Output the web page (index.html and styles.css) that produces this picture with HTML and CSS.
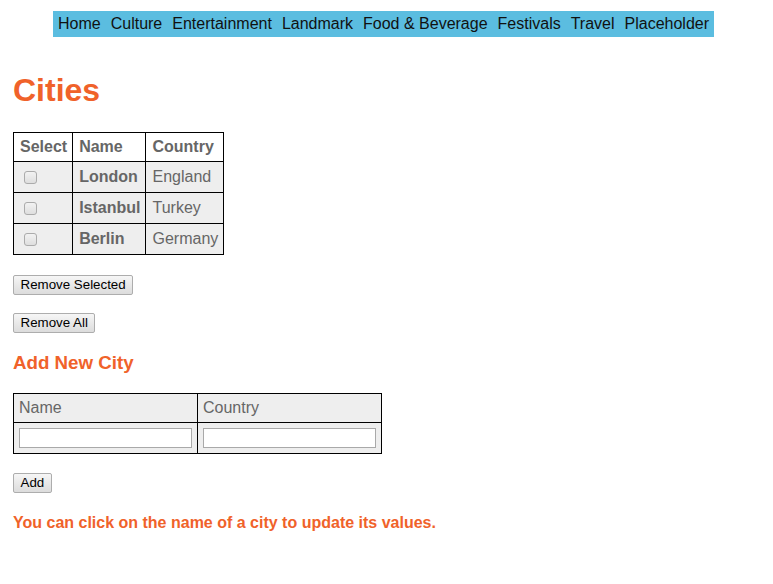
FILE: index.html
```html
<!DOCTYPE html>
<html>
<head>
<meta charset="utf-8">
<title>Cities</title>
<link rel="stylesheet" href="styles.css">
</head>
<body>
<div class="page">
<nav class="nav">
  <a class="nav-item" href="#">Home</a>
  <a class="nav-item" href="#">Culture</a>
  <a class="nav-item" href="#">Entertainment</a>
  <a class="nav-item" href="#">Landmark</a>
  <a class="nav-item" href="#">Food &amp; Beverage</a>
  <a class="nav-item" href="#">Festivals</a>
  <a class="nav-item" href="#">Travel</a>
  <a class="nav-item" href="#">Placeholder</a>
</nav>

<h1 class="title">Cities</h1>

<table class="cities">
  <thead>
    <tr><th>Select</th><th>Name</th><th>Country</th></tr>
  </thead>
  <tbody>
    <tr><td><input class="check" type="checkbox"></td><th>London</th><td>England</td></tr>
    <tr><td><input class="check" type="checkbox"></td><th>Istanbul</th><td>Turkey</td></tr>
    <tr><td><input class="check" type="checkbox"></td><th>Berlin</th><td>Germany</td></tr>
  </tbody>
</table>

<div class="actions">
  <button class="btn" type="button">Remove Selected</button>
  <button class="btn" type="button">Remove All</button>
</div>

<h3 class="subtitle">Add New City</h3>

<table class="add">
  <tr><td>Name</td><td>Country</td></tr>
  <tr><td><input class="field" type="text"></td><td><input class="field" type="text"></td></tr>
</table>

<div class="add-actions">
  <button class="btn" type="button">Add</button>
</div>

<h4 class="note">You can click on the name of a city to update its values.</h4>
</div>
</body>
</html>
```
FILE: styles.css
```css
body {
  margin: 8px;
  font-family: Arial, "Liberation Sans", sans-serif;
  font-size: 16px;
  color: #000;
  background: #fff;
}

.page {
  padding-left: 5px;
}

.nav {
  display: flex;
  width: fit-content;
  margin: 3px 0 0 40px;
  padding: 4px 0;
  background: #5bbde0;
}

.nav-item {
  padding: 0 5px;
  color: #111;
  text-decoration: none;
  line-height: 18px;
}

.title {
  margin: 35px 0 23px;
  font-size: 32px;
  line-height: 37px;
  color: #f0622a;
}

.cities,
.add {
  border-collapse: collapse;
  color: #666;
}

.cities th,
.cities td {
  border: 1px solid #000;
  padding: 6px 5px 6px 6px;
  line-height: 18px;
  text-align: left;
}

.cities thead th {
  background: #fff;
  padding-top: 5px;
  padding-bottom: 5px;
}

.cities tbody tr {
  background: #eee;
}

.cities tbody td:first-child {
  padding-top: 4px;
  padding-bottom: 4px;
}

.check {
  appearance: none;
  -webkit-appearance: none;
  display: block;
  width: 13px;
  height: 13px;
  margin: 3px 0 3px 4px;
  border: 1px solid #ababab;
  border-radius: 3px;
  background: linear-gradient(#f2f2f2, #dedede);
  box-sizing: border-box;
}

.actions {
  display: flex;
  flex-direction: column;
  align-items: flex-start;
  gap: 18px;
  margin-top: 20px;
}

.btn {
  font-family: Arial, "Liberation Sans", sans-serif;
  font-size: 13.333px;
  line-height: 16px;
  height: 20px;
  padding: 1px 6.5px;
  color: #000;
  border: 1px solid #adadad;
  border-radius: 2px;
  background: linear-gradient(#f6f6f6, #dcdcdc);
  box-sizing: border-box;
}

.subtitle {
  margin: 19px 0 19px;
  font-size: 18.72px;
  line-height: 22px;
  color: #f0622a;
}

.add {
  background: #eee;
}

.add td {
  width: 173px;
  border: 1px solid #000;
  padding: 5px;
  line-height: 18px;
  vertical-align: middle;
}

.field {
  display: block;
  width: 173px;
  height: 20px;
  margin: 0;
  padding: 1px 3px;
  border: 1px solid #a9a9a9;
  background: #fff;
  box-sizing: border-box;
}

.add-actions {
  margin-top: 19px;
}

.note {
  margin: 21px 0;
  font-size: 16px;
  line-height: 18px;
  color: #f0622a;
}
```
